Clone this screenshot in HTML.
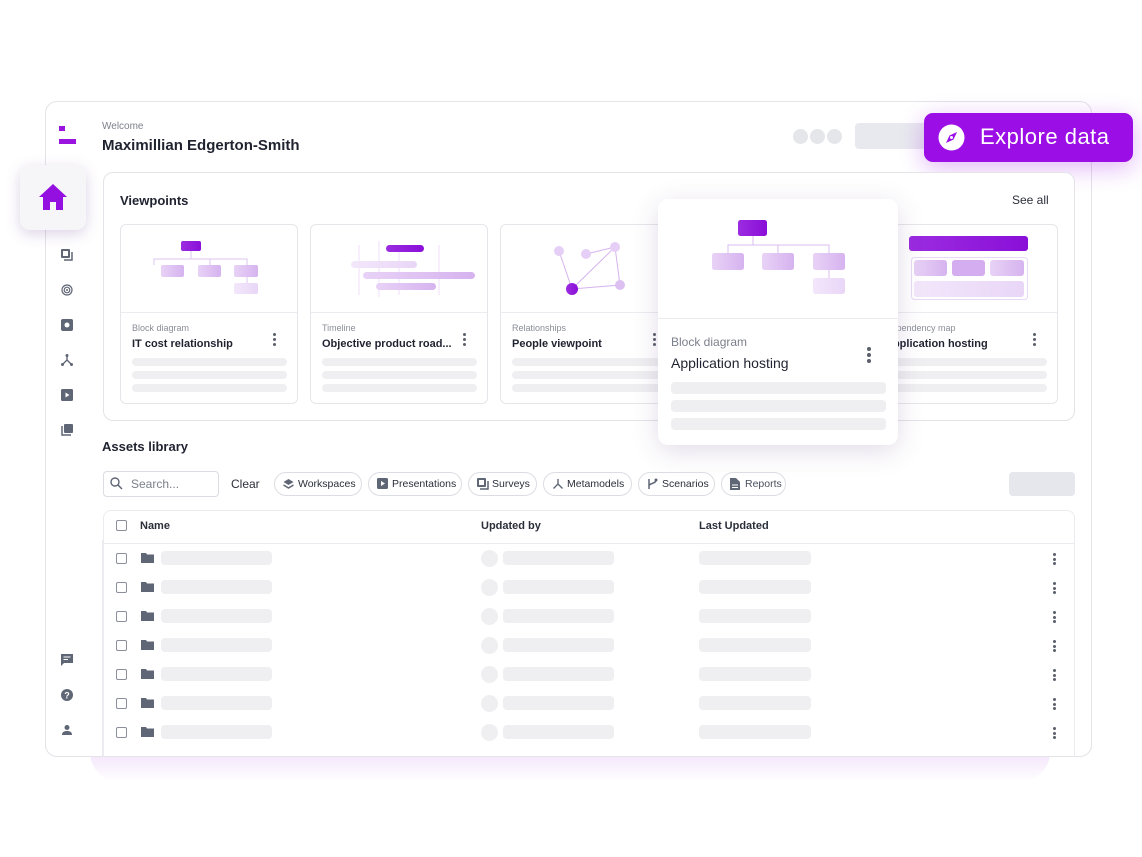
<!DOCTYPE html>
<html><head><meta charset="utf-8"><style>
*{box-sizing:border-box;margin:0;padding:0}
body{width:1142px;height:857px;background:#fff;position:relative;overflow:hidden;font-family:"Liberation Sans",sans-serif;color:#1f2330}
.a{position:absolute}
.sk{position:absolute;background:#efeff1;border-radius:4px}
.card{position:absolute;top:224px;width:178px;height:180px;border:1px solid #e6e6ea;border-radius:6px;background:#fff;overflow:hidden}
.card .div{position:absolute;left:0;right:0;top:87px;border-top:1px solid #ececf0}
.card .t1{position:absolute;left:11px;top:98px;font-size:9px;color:#8a8d97}
.card .t2{position:absolute;left:11px;top:113px;font-size:11px;font-weight:bold;color:#1f2330}
.dots{position:absolute;width:3px}
.dots i{display:block;width:3px;height:3px;border-radius:50%;background:#5a5f6b;margin-bottom:2px}
.chip{position:absolute;top:472px;height:24px;border:1px solid #dcdde2;border-radius:12px;font-size:10.5px;color:#2b2f3a;line-height:22px;padding-left:23px;white-space:nowrap}
.chip svg{position:absolute;left:8px;top:5px}
.sb{position:absolute;left:61px;width:12px;height:12px}
</style></head><body>
<div class="a" style="left:90px;top:752px;width:960px;height:30px;background:linear-gradient(#f3e4fb,#fff);border-radius:0 0 40px 40px"></div>
<div class="a" style="left:45px;top:101px;width:1047px;height:656px;border:1px solid #e3e3e8;border-radius:12px;background:#fff"></div>
<div class="a" style="left:102px;top:540px;width:1px;height:216px;background:#ececf0"></div>
<div class="a" style="left:59px;top:126px;width:6px;height:5px;background:#9a14e0"></div>
<div class="a" style="left:59px;top:139px;width:17px;height:5px;background:#9a14e0"></div>
<div class="a" style="left:102px;top:121px;font-size:10px;color:#7c808b">Welcome</div>
<div class="a" style="left:102px;top:137px;font-size:15px;font-weight:bold;color:#1f2330">Maximillian Edgerton-Smith</div>
<div class="a" style="left:793px;top:129px;width:15px;height:15px;border-radius:50%;background:#e5e6ea"></div>
<div class="a" style="left:810px;top:129px;width:15px;height:15px;border-radius:50%;background:#e5e6ea"></div>
<div class="a" style="left:827px;top:129px;width:15px;height:15px;border-radius:50%;background:#e5e6ea"></div>
<div class="a" style="left:855px;top:123px;width:80px;height:26px;border-radius:4px;background:#e8e9ee"></div>
<div class="a" style="left:924px;top:113px;width:209px;height:49px;border-radius:9px;background:#9b0ee6;box-shadow:0 6px 24px rgba(155,14,230,.3)"></div>
<svg class="a" style="left:937px;top:123px" width="29" height="29" viewBox="0 0 29 29"><circle cx="14.5" cy="14.5" r="13" fill="#fff"/><path d="M20 9 L16.5 16.5 L9 20 L12.5 12.5 Z" fill="#9b0ee6"/><circle cx="14.5" cy="14.5" r="1.5" fill="#fff"/></svg>
<div class="a" style="left:980px;top:124px;font-size:22px;color:#fff;letter-spacing:.5px">Explore data</div>
<div class="a" style="left:20px;top:165px;width:66px;height:65px;border-radius:10px;background:#f6f6f9;box-shadow:0 4px 14px rgba(120,80,160,.25)"></div>
<svg class="a" style="left:38px;top:183px" width="30" height="28" viewBox="0 0 30 28"><path d="M15 1 L29 14 H25 V27 H18 V19 H12 V27 H5 V14 H1 Z" fill="#9410e0"/></svg>
<svg class="sb" style="top:249px" viewBox="0 0 12 12"><rect x="0" y="0" width="9" height="9" rx="1" fill="#5f6675"/><path d="M11 3V11H3" stroke="#5f6675" stroke-width="1.5" fill="none"/><rect x="2" y="2" width="5" height="5" fill="#fff"/></svg>
<svg class="sb" style="top:284px" viewBox="0 0 12 12"><circle cx="6" cy="6" r="5" stroke="#5f6675" fill="none" stroke-width="1.2"/><circle cx="6" cy="6" r="2.8" stroke="#5f6675" fill="none" stroke-width="1.2"/><circle cx="6" cy="6" r="1" fill="#5f6675"/></svg>
<svg class="sb" style="top:319px" viewBox="0 0 12 12"><rect x="0" y="0" width="12" height="12" rx="2" fill="#5f6675"/><circle cx="6" cy="6" r="2.5" fill="#fff"/></svg>
<svg class="sb" style="top:354px" viewBox="0 0 12 12"><path d="M6 1V6L1.5 10.5M6 6L10.5 10.5" stroke="#5f6675" stroke-width="1.4" fill="none"/><circle cx="6" cy="1.5" r="1.5" fill="#5f6675"/><circle cx="1.5" cy="10.5" r="1.5" fill="#5f6675"/><circle cx="10.5" cy="10.5" r="1.5" fill="#5f6675"/></svg>
<svg class="sb" style="top:389px" viewBox="0 0 12 12"><rect x="0" y="0" width="12" height="12" rx="1.5" fill="#5f6675"/><path d="M4.5 3.5L8.5 6L4.5 8.5Z" fill="#fff"/></svg>
<svg class="sb" style="top:424px" viewBox="0 0 12 12"><rect x="3" y="0" width="9" height="9" rx="1" fill="#5f6675"/><path d="M1 2V11H10" stroke="#5f6675" stroke-width="1.5" fill="none"/></svg>
<svg class="sb" style="top:654px" viewBox="0 0 12 12"><path d="M0 0H12V9H3L0 12Z" fill="#5f6675"/><path d="M2.5 3H9.5M2.5 5.5H7" stroke="#fff" stroke-width="1"/></svg>
<svg class="sb" style="top:689px" viewBox="0 0 12 12"><circle cx="6" cy="6" r="6" fill="#5f6675"/><text x="6" y="9.5" font-size="9" font-weight="bold" fill="#fff" text-anchor="middle" font-family="Liberation Sans">?</text></svg>
<svg class="sb" style="top:724px" viewBox="0 0 12 12"><circle cx="6" cy="3.5" r="2.5" fill="#5f6675"/><path d="M1 11C1 8 3 7 6 7C9 7 11 8 11 11Z" fill="#5f6675"/></svg>
<div class="a" style="left:103px;top:172px;width:972px;height:249px;border:1px solid #e3e3e8;border-radius:10px;background:#fff"></div>
<div class="a" style="left:120px;top:193px;font-size:13px;font-weight:bold">Viewpoints</div>
<div class="a" style="left:1012px;top:193px;font-size:12px;color:#2b2f3a">See all</div>
<svg width="0" height="0" class="a"><defs>
<linearGradient id="gd" x1="0" x2="1"><stop offset="0" stop-color="#9b2ce0"/><stop offset="1" stop-color="#8a0fd8"/></linearGradient>
<linearGradient id="gl" x1="0" x2="1"><stop offset="0" stop-color="#e8d2f6"/><stop offset="1" stop-color="#d6b3ef"/></linearGradient>
<linearGradient id="gf" x1="0" x2="1"><stop offset="0" stop-color="#f3e7fb"/><stop offset="1" stop-color="#e9d6f7"/></linearGradient>
</defs></svg>
<div class="card" style="left:120px">
<svg class="a" style="left:0;top:0" width="178" height="87"><path d="M70 26V34H33V40M70 34H89V40M70 34H126V40M126 52V58" stroke="#ddc6f0" fill="none"/><rect x="60" y="16" width="20" height="10" rx="2" fill="url(#gd)"/><rect x="40" y="40" width="23" height="12" rx="2" fill="url(#gl)"/><rect x="77" y="40" width="23" height="12" rx="2" fill="url(#gl)"/><rect x="113" y="40" width="24" height="12" rx="2" fill="url(#gl)"/><rect x="113" y="58" width="24" height="11" rx="2" fill="url(#gf)"/></svg>
<div class="div"></div><div class="t1">Block diagram</div><div class="t2">IT cost relationship</div>
<div class="dots" style="left:152px;top:108px"><i></i><i></i><i></i></div>
<div class="sk" style="left:11px;top:133px;width:155px;height:8px"></div><div class="sk" style="left:11px;top:146px;width:155px;height:8px"></div><div class="sk" style="left:11px;top:159px;width:155px;height:8px"></div>
</div>
<div class="card" style="left:310px">
<svg class="a" style="left:0;top:0" width="178" height="87"><path d="M48 20V70M68 16V72M88 20V70M128 20V70" stroke="#efe2f8"/><rect x="40" y="36" width="66" height="7" rx="3.5" fill="url(#gf)"/><rect x="52" y="47" width="112" height="7" rx="3.5" fill="url(#gl)"/><rect x="65" y="58" width="60" height="7" rx="3.5" fill="url(#gl)"/><rect x="75" y="20" width="38" height="7" rx="3.5" fill="url(#gd)"/></svg>
<div class="div"></div><div class="t1">Timeline</div><div class="t2">Objective product road...</div>
<div class="dots" style="left:152px;top:108px"><i></i><i></i><i></i></div>
<div class="sk" style="left:11px;top:133px;width:155px;height:8px"></div><div class="sk" style="left:11px;top:146px;width:155px;height:8px"></div><div class="sk" style="left:11px;top:159px;width:155px;height:8px"></div>
</div>
<div class="card" style="left:500px">
<svg class="a" style="left:0;top:0" width="178" height="87"><path d="M58 26L71 64L119 60L114 22L85 29M114 22L71 64" stroke="#d6b3ef" fill="none"/><circle cx="58" cy="26" r="5" fill="#e6cff6"/><circle cx="85" cy="29" r="5" fill="#e6cff6"/><circle cx="114" cy="22" r="5" fill="#e6cff6"/><circle cx="119" cy="60" r="5" fill="#dcc0f2"/><circle cx="71" cy="64" r="6" fill="url(#gd)"/></svg>
<div class="div"></div><div class="t1">Relationships</div><div class="t2">People viewpoint</div>
<div class="dots" style="left:152px;top:108px"><i></i><i></i><i></i></div>
<div class="sk" style="left:11px;top:133px;width:155px;height:8px"></div><div class="sk" style="left:11px;top:146px;width:155px;height:8px"></div><div class="sk" style="left:11px;top:159px;width:155px;height:8px"></div>
</div>
<div class="card" style="left:880px">
<svg class="a" style="left:0;top:0" width="178" height="87"><rect x="28" y="11" width="119" height="15" rx="3" fill="url(#gd)"/><rect x="30.5" y="32.5" width="116" height="42" rx="3" fill="#fff" stroke="#ead9f6"/><rect x="33" y="35" width="33" height="16" rx="3" fill="url(#gl)"/><rect x="71" y="35" width="33" height="16" rx="3" fill="#d3adef"/><rect x="109" y="35" width="34" height="16" rx="3" fill="url(#gl)"/><rect x="33" y="56" width="110" height="16" rx="3" fill="url(#gf)"/></svg>
<div class="div"></div><div class="t1" style="left:4px">Dependency map</div><div class="t2" style="left:4px">Application hosting</div>
<div class="dots" style="left:152px;top:108px"><i></i><i></i><i></i></div>
<div class="sk" style="left:4px;top:133px;width:162px;height:8px"></div><div class="sk" style="left:4px;top:146px;width:162px;height:8px"></div><div class="sk" style="left:4px;top:159px;width:162px;height:8px"></div>
</div>
<div class="a" style="left:658px;top:199px;width:240px;height:246px;border-radius:10px;background:#fff;box-shadow:0 6px 26px rgba(90,60,120,.18);overflow:hidden">
<svg class="a" style="left:0;top:0" width="240" height="118"><path d="M95 37V46H70V54M95 46H120V54M95 46H171V54M171 71V80" stroke="#d9bdf0" fill="none"/><rect x="80" y="21" width="29" height="16" rx="2.5" fill="url(#gd)"/><rect x="54" y="54" width="32" height="17" rx="2.5" fill="url(#gl)"/><rect x="104" y="54" width="32" height="17" rx="2.5" fill="url(#gl)"/><rect x="155" y="54" width="32" height="17" rx="2.5" fill="url(#gl)"/><rect x="155" y="79" width="32" height="16" rx="2.5" fill="url(#gf)"/></svg>
<div class="a" style="left:0;right:0;top:119px;border-top:1px solid #ececf0"></div>
<div class="a" style="left:13px;top:136px;font-size:12px;color:#7c808b">Block diagram</div>
<div class="a" style="left:13px;top:156px;font-size:14px;color:#1f2330">Application hosting</div>
<div class="dots" style="left:209px;top:148px"><i style="width:4px;height:4px"></i><i style="width:4px;height:4px"></i><i style="width:4px;height:4px"></i></div>
<div class="sk" style="left:13px;top:183px;width:215px;height:12px"></div><div class="sk" style="left:13px;top:201px;width:215px;height:12px"></div><div class="sk" style="left:13px;top:219px;width:215px;height:12px"></div>
</div>
<div class="a" style="left:102px;top:439px;font-size:13px;font-weight:bold">Assets library</div>
<div class="a" style="left:103px;top:471px;width:116px;height:26px;border:1px solid #dcdde2;border-radius:4px"></div>
<svg class="a" style="left:110px;top:477px" width="13" height="13" viewBox="0 0 13 13"><circle cx="5" cy="5" r="4" stroke="#5f6675" stroke-width="1.4" fill="none"/><path d="M8 8L12 12" stroke="#5f6675" stroke-width="1.5"/></svg>
<div class="a" style="left:131px;top:477px;font-size:12px;color:#7c808b">Search...</div>
<div class="a" style="left:231px;top:477px;font-size:12px;color:#2b2f3a">Clear</div>
<div class="chip" style="left:274px;width:88px"><svg width="11" height="12" viewBox="0 0 11 12"><path d="M5.5 1L10.5 4L5.5 7L0.5 4Z" fill="#5f6675"/><path d="M0.5 7L5.5 10L10.5 7" stroke="#5f6675" stroke-width="1.5" fill="none"/></svg>Workspaces</div>
<div class="chip" style="left:368px;width:94px"><svg width="11" height="11" viewBox="0 0 11 11"><rect width="11" height="11" rx="1.5" fill="#5f6675"/><path d="M4 3L8 5.5L4 8Z" fill="#fff"/></svg>Presentations</div>
<div class="chip" style="left:468px;width:69px"><svg width="12" height="12" viewBox="0 0 12 12"><rect width="9" height="9" rx="1" fill="#5f6675"/><rect x="2" y="2" width="5" height="5" fill="#fff"/><path d="M11 3V11H3" stroke="#5f6675" stroke-width="1.5" fill="none"/></svg>Surveys</div>
<div class="chip" style="left:543px;width:89px"><svg width="12" height="12" viewBox="0 0 12 12"><path d="M6 1V6L1.5 10.5M6 6L10.5 10.5" stroke="#5f6675" stroke-width="1.4" fill="none"/></svg>Metamodels</div>
<div class="chip" style="left:638px;width:77px"><svg width="11" height="12" viewBox="0 0 11 12"><path d="M2 1V11M2 8C2 5 9 6 9 2" stroke="#5f6675" stroke-width="1.5" fill="none"/><circle cx="9" cy="2" r="1.5" fill="#5f6675"/></svg>Scenarios</div>
<div class="chip" style="left:721px;width:65px;color:#4a4f5c"><svg width="10" height="12" viewBox="0 0 10 12"><path d="M0 0H6L10 4V12H0Z" fill="#5f6675"/><path d="M2 7H8M2 9.5H8" stroke="#fff"/></svg>Reports</div>
<div class="a" style="left:1009px;top:472px;width:66px;height:24px;border-radius:4px;background:#e6e7ec"></div>
<div class="a" style="left:103px;top:510px;width:972px;height:247px;border:1px solid #ececf0;border-bottom:none;border-radius:8px 8px 0 0"></div>
<div class="a" style="left:104px;top:543px;width:970px;border-top:1px solid #ececf0"></div>
<div class="a" style="left:116px;top:520px;width:11px;height:11px;border:1.5px solid #8a8f9b;border-radius:2px"></div>
<div class="a" style="left:140px;top:520px;font-size:11px;font-weight:bold;color:#2b2f3a">Name</div>
<div class="a" style="left:481px;top:520px;font-size:11px;font-weight:bold;color:#2b2f3a">Updated by</div>
<div class="a" style="left:699px;top:520px;font-size:11px;font-weight:bold;color:#2b2f3a">Last Updated</div>
<div id="rows"></div>
<script>
var h='';[558,587,616,645,674,703,732].forEach(function(y){
h+='<div class="a" style="left:116px;top:'+(y-5)+'px;width:11px;height:11px;border:1.5px solid #8a8f9b;border-radius:2px"></div>';
h+='<svg class="a" style="left:141px;top:'+(y-5)+'px" width="13" height="10" viewBox="0 0 13 10"><path d="M0 0H5L6 1.5H13V10H0Z" fill="#5f6675"/></svg>';
h+='<div class="sk" style="left:161px;top:'+(y-7)+'px;width:111px;height:14px"></div>';
h+='<div class="a" style="left:481px;top:'+(y-8)+'px;width:17px;height:17px;border-radius:50%;background:#efeff1"></div>';
h+='<div class="sk" style="left:503px;top:'+(y-7)+'px;width:111px;height:14px"></div>';
h+='<div class="sk" style="left:699px;top:'+(y-7)+'px;width:112px;height:14px"></div>';
h+='<div class="dots" style="left:1053px;top:'+(y-5)+'px"><i style="margin-bottom:1.5px"></i><i style="margin-bottom:1.5px"></i><i></i></div>';
});document.getElementById('rows').innerHTML=h;
</script>
</body></html>
